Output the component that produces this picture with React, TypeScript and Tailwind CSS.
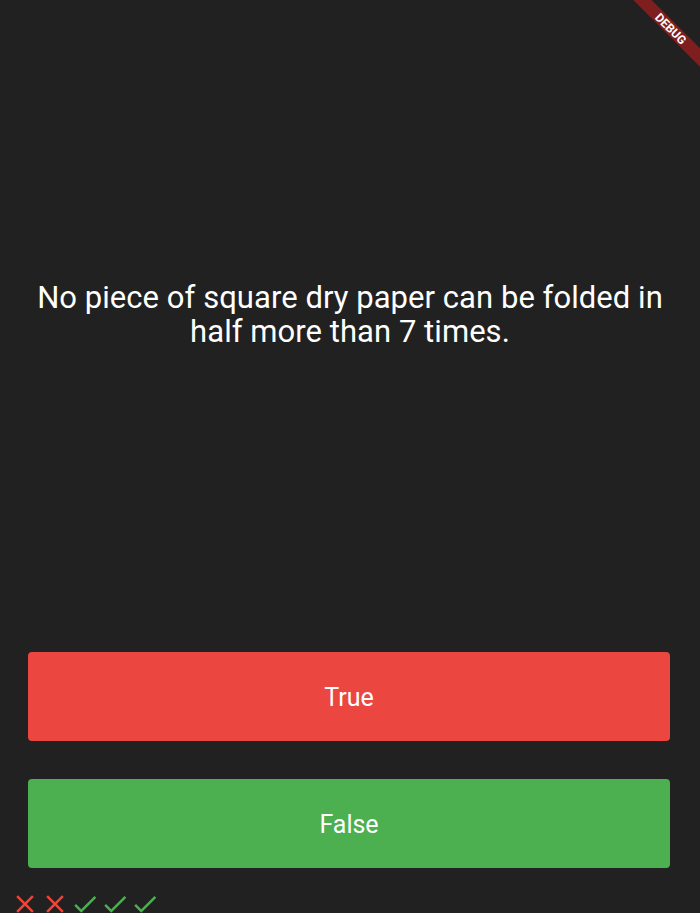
import React from "react";

const Close = () => (
  <svg width="30" height="30" viewBox="0 0 24 24" fill="#f44336">
    <path d="M19 6.41L17.59 5 12 10.59 6.41 5 5 6.41 10.59 12 5 17.59 6.41 19 12 13.41 17.59 19 19 17.59 13.41 12z" />
  </svg>
);

const Check = () => (
  <svg width="30" height="30" viewBox="0 0 24 24" fill="#4caf50">
    <path d="M9 16.17L4.83 12l-1.42 1.41L9 19 21 7l-1.41-1.41z" />
  </svg>
);

export default function App() {
  return (
    <div
      className="relative w-[700px] h-[913px] bg-[#212121] overflow-hidden flex flex-col"
      style={{ fontFamily: "Roboto, 'Noto Sans', sans-serif" }}
    >
      <div className="h-[635px] shrink-0 flex items-center justify-center px-[24px] pb-[6px]">
        <p className="text-white text-[31px] leading-[34px] text-center tracking-[0.05px]">
          No piece of square dry paper can be folded in half more than 7 times.
        </p>
      </div>
      <div className="h-[127px] shrink-0 pt-[17px] pl-[28px] pr-[30px]">
        <button className="w-full h-[89px] rounded-[4px] bg-[#ec4640] text-white text-[25px] flex items-center justify-center pt-[2px]">
          True
        </button>
      </div>
      <div className="h-[127px] shrink-0 pt-[17px] pl-[28px] pr-[30px]">
        <button className="w-full h-[89px] rounded-[4px] bg-[#4caf50] text-white text-[25px] flex items-center justify-center pt-[2px]">
          False
        </button>
      </div>
      <div className="flex pl-[10px] shrink-0">
        <Close />
        <Close />
        <Check />
        <Check />
        <Check />
      </div>
      <div className="absolute left-[611px] top-[22px] w-[120px] h-[13px] bg-[#7f1e1e] rotate-45 flex items-center justify-center">
        <span className="text-white text-[12px] font-bold leading-none">DEBUG</span>
      </div>
    </div>
  );
}
